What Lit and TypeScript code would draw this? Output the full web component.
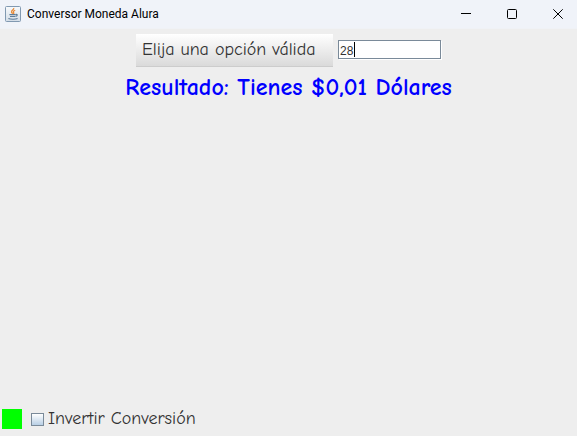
import { LitElement, html, css } from "lit";
import { customElement, state } from "lit/decorators.js";
import { styleMap } from "lit/directives/style-map.js";

@customElement("app-root")
export class AppRoot extends LitElement {
  static styles = css`
    :host {
      display: flex;
      flex-direction: column;
      min-height: 100vh;
      box-sizing: border-box;
      background: #eeeeee;
      color: #333333;
      font-family: "Comic Sans MS", "Comic Neue", Lato, sans-serif;
    }
    .titlebar {
      display: flex;
      align-items: center;
      height: 28px;
      padding-left: 5px;
      border-bottom: 1px solid #f0f2f6;
      background: #f0f3f9;
      overflow: hidden;
    }
    .logo {
      width: 16px;
      height: 16px;
      margin-right: 6px;
    }
    .title {
      flex: 1;
      margin: 0;
      color: #000000;
      font: 400 12px/16px "Segoe UI", Roboto, sans-serif;
    }
    .buttons {
      display: flex;
      margin-right: -4px;
    }
    .win {
      display: flex;
      align-items: center;
      justify-content: center;
      width: 46px;
      height: 26px;
      padding: 0;
      border: 0;
      background: none;
      color: #000000;
    }
    .controls {
      display: flex;
      justify-content: center;
      align-items: center;
      gap: 5px;
      padding-top: 5px;
    }
    .menu {
      width: 197px;
      height: 33px;
      padding: 0 6px;
      border: 0;
      border-bottom: 1px solid #cccccc;
      background: linear-gradient(#ffffff, #dadada);
      color: #333333;
      font: 400 18px/24px "Comic Sans MS", "Comic Neue", Lato, sans-serif;
      text-align: left;
      white-space: nowrap;
    }
    .field {
      display: flex;
      position: relative;
      padding-bottom: 2px;
      color: #333333;
      font: 400 12px/16px "Liberation Sans", Arial, sans-serif;
    }
    .amount {
      box-sizing: border-box;
      width: 103px;
      height: 19px;
      padding: 2px 1px 0;
      border: 1px solid #7a8a99;
      border-radius: 0;
      outline: 0;
      background: #ffffff;
      color: inherit;
      box-shadow: 1px 1px 0 #ffffff;
      font: inherit;
      caret-color: transparent;
    }
    .caret {
      position: absolute;
      top: 2px;
      width: 1px;
      height: 15px;
      background: #000000;
      pointer-events: none;
    }
    .result {
      margin: 6px 0 0;
      color: #0000ff;
      font-size: 24px;
      line-height: 28px;
      font-weight: 700;
      text-align: center;
    }
    .footer {
      display: flex;
      align-items: center;
      margin-top: auto;
      padding: 0 2px 7px;
    }
    .swatch {
      width: 20px;
      height: 20px;
      margin-right: 9px;
      background: #00ff00;
    }
    .option {
      display: flex;
      align-items: center;
      gap: 4px;
      font-size: 18px;
      line-height: 20px;
    }
    .check {
      appearance: none;
      box-sizing: border-box;
      width: 13px;
      height: 13px;
      margin: 0;
      border: 1px solid #7a8a99;
      background: linear-gradient(#ffffff, #b8cfe5);
    }
    .check:checked {
      background: #7a8a99;
    }
  `;

  @state() private inverted = false;
  @state() private amount = "28";

  render() {
    return html`
      <header class="titlebar">
        <svg class="logo" viewBox="0 0 16 16" aria-hidden="true">
          <defs>
            <linearGradient id="tile" x1="0" y1="0" x2="0" y2="1">
              <stop offset="0" stop-color="#f8fafc" />
              <stop offset="1" stop-color="#d3dde7" />
            </linearGradient>
          </defs>
          <rect x=".5" y=".5" width="15" height="15" rx="1" fill="url(#tile)" stroke="#8199b1" />
          <path d="M8.7 2c.8 1.6-2.6 2.3-2.2 4 .2.7.9 1.2 1.3 1.7M10.2 4.2c-2 .8-2.3 1.5-1.5 2.4.4.5.2 1-.3 1.5" fill="none" stroke="#e8862f" stroke-width="1.2" />
          <path d="M4.4 8.6h6.2M5 10.5h5.2M10.8 8.4c2-.4 1.9 1.4-.2 2M3.4 12.5c2 1 7.2 1 9.2 0" fill="none" stroke="#5f7d99" stroke-width="1.2" />
        </svg>
        <h1 class="title">Conversor Moneda Alura</h1>
        <div class="buttons">
          <button class="win" aria-label="Minimizar">
            <svg width="10" height="10" viewBox="0 0 10 10"><path d="M0 4.5h10" stroke="currentColor" /></svg>
          </button>
          <button class="win" aria-label="Maximizar">
            <svg width="10" height="10" viewBox="0 0 10 10"><rect x=".5" y=".5" width="9" height="9" rx="1" fill="none" stroke="currentColor" /></svg>
          </button>
          <button class="win" aria-label="Cerrar">
            <svg width="10" height="10" viewBox="0 0 10 10"><path d="M.3.3l9.4 9.4M9.7.3L.3 9.7" stroke="currentColor" /></svg>
          </button>
        </div>
      </header>
      <div class="controls">
        <button class="menu" aria-haspopup="menu">Elija una opción válida</button>
        <div class="field">
          <input
            class="amount"
            type="text"
            aria-label="Cantidad"
            .value=${this.amount}
            @input=${(e: Event) => (this.amount = (e.target as HTMLInputElement).value)}
          />
          <span class="caret" style=${styleMap({ left: `calc(3px + ${this.amount.length}ch)` })}></span>
        </div>
      </div>
      <p class="result">Resultado: Tienes $0,01 Dólares</p>
      <footer class="footer">
        <span class="swatch"></span>
        <label class="option">
          <input
            class="check"
            type="checkbox"
            .checked=${this.inverted}
            @change=${(e: Event) => (this.inverted = (e.target as HTMLInputElement).checked)}
          />
          Invertir Conversión
        </label>
      </footer>
    `;
  }
}
